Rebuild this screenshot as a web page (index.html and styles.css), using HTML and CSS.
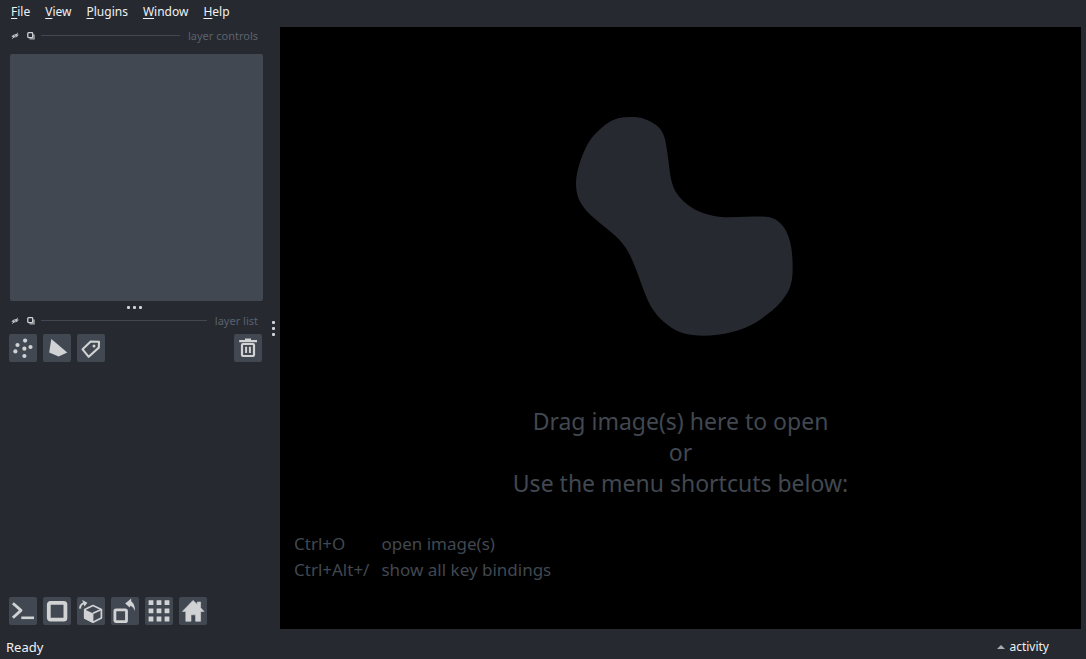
FILE: index.html
```html
<!DOCTYPE html>
<html lang="en">
<head>
<meta charset="utf-8">
<title>napari</title>
<link rel="stylesheet" href="styles.css">
</head>
<body>
<div class="app">
  <nav class="menubar" aria-label="Main menu">
    <button type="button"><u>F</u>ile</button>
    <button type="button"><u>V</u>iew</button>
    <button type="button"><u>P</u>lugins</button>
    <button type="button"><u>W</u>indow</button>
    <button type="button"><u>H</u>elp</button>
  </nav>

  <div class="workspace">
    <aside class="docks">
      <section class="dock">
        <header class="dock-title">
          <button type="button" class="title-button" aria-label="Hide layer controls">
            <svg viewBox="0 0 8 8"><path d="M.3 4.6Q3.4.6 7.8 2.8Q5.4 7.2 .3 4.6Z" fill="#b4b6b8"/><circle cx="4" cy="3.8" r="1" fill="#53565b"/><path d="M1.2 6.6 6.8 1" stroke="#d1d2d4"/></svg>
          </button>
          <button type="button" class="title-button" aria-label="Float layer controls">
            <svg viewBox="0 0 8 8"><path d="M2.6 6.9H7V2.6" fill="none" stroke="#a9abae" stroke-width="1.4"/><rect x=".8" y=".7" width="4.9" height="4.9" rx=".8" fill="#262930" stroke="#d1d2d4" stroke-width="1.3"/></svg>
          </button>
          <span class="rule"></span>
          <h2>layer controls</h2>
        </header>
        <div class="controls-panel"></div>
      </section>
      <div class="grip grip-row"><i></i><i></i><i></i></div>
      <section class="dock dock-list">
        <header class="dock-title">
          <button type="button" class="title-button" aria-label="Hide layer list">
            <svg viewBox="0 0 8 8"><path d="M.3 4.6Q3.4.6 7.8 2.8Q5.4 7.2 .3 4.6Z" fill="#b4b6b8"/><circle cx="4" cy="3.8" r="1" fill="#53565b"/><path d="M1.2 6.6 6.8 1" stroke="#d1d2d4"/></svg>
          </button>
          <button type="button" class="title-button" aria-label="Float layer list">
            <svg viewBox="0 0 8 8"><path d="M2.6 6.9H7V2.6" fill="none" stroke="#a9abae" stroke-width="1.4"/><rect x=".8" y=".7" width="4.9" height="4.9" rx=".8" fill="#262930" stroke="#d1d2d4" stroke-width="1.3"/></svg>
          </button>
          <span class="rule"></span>
          <h2>layer list</h2>
        </header>
        <div class="toolbar">
          <button type="button" class="tool" aria-label="New points layer">
            <svg viewBox="0 0 28 28"><g fill="#d1d2d4"><circle cx="16.1" cy="6.6" r="2.1"/><circle cx="8.5" cy="11" r="2.1"/><circle cx="21.5" cy="13" r="2.1"/><circle cx="15.4" cy="14.7" r="2.1"/><circle cx="6.4" cy="17.4" r="2.1"/><circle cx="15.4" cy="22" r="2.1"/></g></svg>
          </button>
          <button type="button" class="tool" aria-label="New shapes layer">
            <svg viewBox="0 0 28 28"><path d="M8.3 4.9 24.3 18.6 15.6 22.5 6.2 18.6Z" fill="#d1d2d4"/></svg>
          </button>
          <button type="button" class="tool" aria-label="New labels layer">
            <svg viewBox="0 0 28 28"><path d="M13.7 7.6 22 7.8 21.8 13.6 11.7 22.8 5.6 15.3Z" fill="none" stroke="#d1d2d4" stroke-width="2.1" stroke-linejoin="round"/><circle cx="17" cy="12" r="1.5" fill="#d1d2d4"/></svg>
          </button>
          <button type="button" class="tool tool-end" aria-label="Delete selected layers">
            <svg viewBox="0 0 28 28"><path d="M11 6V4.6h6V6h6v2.2H5.2V6Z" fill="#d1d2d4"/><rect x="8" y="10" width="12" height="12" rx="1" fill="none" stroke="#d1d2d4" stroke-width="2.2"/><path d="M12.1 12.8v6.2M15.9 12.8v6.2" stroke="#d1d2d4" stroke-width="2"/></svg>
          </button>
        </div>
        <div class="toolbar toolbar-bottom">
          <button type="button" class="tool" aria-label="Open console">
            <svg viewBox="0 0 28 28"><path d="M3.9 6.2 12 13.4 3.9 20.8" fill="none" stroke="#d1d2d4" stroke-width="2.8" stroke-linejoin="round"/><path d="M12.3 20.8H25" stroke="#d1d2d4" stroke-width="2.6"/></svg>
          </button>
          <button type="button" class="tool" aria-label="Toggle 2D and 3D view">
            <svg viewBox="0 0 28 28"><rect x="5.8" y="5.8" width="16.6" height="16.8" rx="1.6" fill="none" stroke="#d1d2d4" stroke-width="3.8"/></svg>
          </button>
          <button type="button" class="tool" aria-label="Roll dimensions">
            <svg viewBox="0 0 28 28"><path d="M16 8.6 24.4 12.4V21L16 25.2 7.7 21V12.4Z" fill="none" stroke="#d1d2d4" stroke-width="1.7" stroke-linejoin="round"/><path d="M7.2 12.3 16.4 16.4V25.9L7.2 21.5Z" fill="#d1d2d4"/><path d="M16 16.2 24.3 12.4" stroke="#d1d2d4" stroke-width="1.7"/><path d="M3.2 11.7Q2.7 8 6.8 6.2" fill="none" stroke="#d1d2d4" stroke-width="2"/><path d="M5.2 2.9 10.4 5.7 7.4 9.6Z" fill="#d1d2d4"/></svg>
          </button>
          <button type="button" class="tool" aria-label="Transpose dimensions">
            <svg viewBox="0 0 28 28"><rect x="3.9" y="12.8" width="11.6" height="11.8" rx="1.2" fill="none" stroke="#d1d2d4" stroke-width="2.8"/><path d="M14.2 6.4 20.2 1.6V4.3Q24.4 7.5 23.8 14Q22.2 9.7 19.4 8.7L18.7 10.4Z" fill="#d1d2d4"/></svg>
          </button>
          <button type="button" class="tool" aria-label="Toggle grid mode">
            <svg viewBox="0 0 28 28"><path d="M3.6 3.3h4.8v4.8H3.6ZM11.6 3.3h4.8v4.8h-4.8ZM19.6 3.3h4.8v4.8h-4.8ZM3.6 11.4h4.8v4.8H3.6ZM11.6 11.4h4.8v4.8h-4.8ZM19.6 11.4h4.8v4.8h-4.8ZM3.6 19.6h4.8v4.8H3.6ZM11.6 19.6h4.8v4.8h-4.8ZM19.6 19.6h4.8v4.8h-4.8Z" fill="#d1d2d4"/></svg>
          </button>
          <button type="button" class="tool" aria-label="Reset view">
            <svg viewBox="0 0 28 28"><path d="M14 3.4 18.3 7.4V5H21.6V10.7L25 14.4H21.6V24.3H16.6V17.8H12V24.3H6.8V14.4H3.4Z" fill="#d1d2d4" stroke="#d1d2d4" stroke-width=".6" stroke-linejoin="round"/></svg>
          </button>
        </div>
      </section>
    </aside>
    <div class="grip grip-column"><i></i><i></i><i></i></div>

    <main class="canvas">
      <svg class="blob" viewBox="24 51 675 657" aria-hidden="true"><path d="M215 51C244 51 265 59 285 73C308 89 315 108 320 145C327 189 329 222 336 248C345 285 374 308 396 323C425 341 466 352 509 352C550 352 584 349 615 350C647 351 664 368 678 392C694 423 698 461 698 505C698 551 689 574 665 603C645 627 617 648 590 666C549 692 486 707 430 707C382 707 354 698 323 675C290 650 270 620 258 588C244 555 233 514 212 470C196 436 177 416 149 393C112 362 86 345 67 316C52 294 48 275 48 247C50 208 65 169 81 136C97 106 129 76 158 61C173 53 191 51 215 51Z" fill="#262930"/></svg>
      <p class="welcome">Drag image(s) here to open<br>or<br>Use the menu shortcuts below:</p>
      <dl class="shortcuts">
        <dt>Ctrl+O</dt><dd>open image(s)</dd>
        <dt>Ctrl+Alt+/</dt><dd>show all key bindings</dd>
      </dl>
    </main>
  </div>

  <footer class="statusbar">
    <span class="status">Ready</span>
    <button type="button" class="activity"><svg viewBox="0 0 8 4" aria-hidden="true"><path d="M0 4 4 0 8 4Z" fill="#a9abae"/></svg>activity</button>
  </footer>
</div>
</body>
</html>
```
FILE: styles.css
```css
* {
  box-sizing: border-box;
}

body {
  margin: 0;
  background: #262930;
  color: #f0f1f2;
  font: 12px/18px "Noto Sans", sans-serif;
}

button {
  padding: 0;
  border: 0;
  background: none;
  color: inherit;
  font: inherit;
}

svg {
  display: block;
}

.app {
  display: flex;
  flex-direction: column;
  min-height: 100vh;
}

.menubar {
  display: flex;
  gap: 15px;
  padding: 3px 11px 6px;
}

.menubar u {
  text-underline-offset: 2px;
  text-decoration-thickness: 1px;
}

.workspace {
  display: flex;
  flex: 1;
  padding-right: 5px;
}

.docks {
  display: flex;
  flex-direction: column;
  width: 265px;
}

.dock {
  display: flex;
  flex-direction: column;
}

.dock-list {
  flex: 1;
}

.dock-title {
  display: flex;
  align-items: center;
  height: 17px;
  padding: 0 7px 0 11px;
}

.title-button {
  width: 8px;
  height: 8px;
  margin-right: 8px;
}

.title-button + .rule {
  flex: 1;
  height: 1px;
  margin: 0 8px 0 -2px;
  background: #414851;
}

.dock-title h2 {
  margin: 0;
  color: #5a626c;
  font-size: 11px;
  font-weight: 400;
}

.controls-panel {
  height: 247px;
  margin: 10px 2px 0 10px;
  border-radius: 2px;
  background: #414851;
}

.grip {
  display: flex;
  align-items: center;
  justify-content: center;
  gap: 3px;
}

.grip i {
  width: 3px;
  height: 3px;
  border-radius: 1px;
  background: #d1d2d4;
}

.grip-row {
  height: 11px;
  padding: 1px 0 0 4px;
}

.grip-column {
  flex-direction: column;
  width: 15px;
  padding-left: 1px;
}

.toolbar {
  display: flex;
  gap: 6px;
  padding: 5px 3px 0 9px;
}

.toolbar-bottom {
  margin-top: auto;
  padding: 0 3px 4px 9px;
}

.tool {
  width: 28px;
  height: 28px;
  border-radius: 2px;
  background: #414851;
}

.tool-end {
  margin-left: auto;
}

.canvas {
  display: flex;
  flex: 1;
  flex-direction: column;
  align-items: center;
  padding: 90px 14px 46px;
  background: #000;
  color: #414851;
}

.blob {
  width: 225px;
  height: 219px;
}

.welcome {
  margin: auto 0 32px;
  font-size: 23px;
  line-height: 31px;
  text-align: center;
}

.shortcuts {
  display: grid;
  grid-template-columns: auto 1fr;
  column-gap: 12px;
  align-self: stretch;
  margin: 0;
  font-size: 17px;
  line-height: 26px;
}

.shortcuts dd {
  margin: 0;
}

.statusbar {
  display: flex;
  align-items: center;
  justify-content: space-between;
  height: 30px;
  padding: 5px 37px 0 6px;
}

.status {
  font-size: 13px;
}

.activity {
  display: flex;
  align-items: center;
  gap: 4px;
}

.activity svg {
  width: 8px;
  height: 4px;
}
```
